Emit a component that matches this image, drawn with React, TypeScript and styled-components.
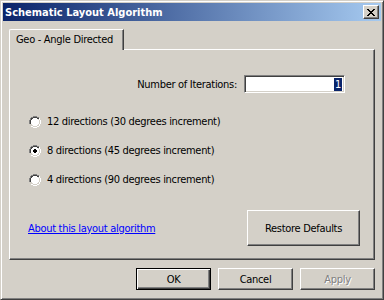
import styled, { createGlobalStyle } from "styled-components";

const GlobalStyle = createGlobalStyle`
  html, body {
    margin: 0;
    padding: 0;
    background: #d4d0c8;
  }
  body {
    font-family: "DejaVu Sans Condensed", "DejaVu Sans", sans-serif;
    font-size: 11px;
    letter-spacing: -0.3px;
    color: #000;
  }
`;

const Window = styled.div`
  width: 384px;
  height: 300px;
  box-sizing: border-box;
  display: flex;
  flex-direction: column;
  background: #d4d0c8;
  border: 1px solid;
  border-color: #d4d0c8 #404040 #404040 #d4d0c8;
  box-shadow: inset 1px 1px 0 #ffffff, inset -1px -1px 0 #808080;
  padding: 2px;
`;

const TitleBar = styled.div`
  height: 18px;
  display: flex;
  align-items: center;
  justify-content: space-between;
  padding: 0 2px 0 2px;
  background: linear-gradient(to right, #0a246a, #a6caf0);
`;

const Title = styled.span`
  color: #ffffff;
  font-weight: bold;
  font-size: 11px;
  letter-spacing: 0;
`;

const CloseButton = styled.div`
  width: 16px;
  height: 14px;
  box-sizing: border-box;
  display: flex;
  align-items: center;
  justify-content: center;
  background: #d4d0c8;
  border: 1px solid;
  border-color: #ffffff #404040 #404040 #ffffff;
  box-shadow: inset -1px -1px 0 #808080;
`;

const Body = styled.div`
  flex: 1;
  display: flex;
  flex-direction: column;
  padding: 8px 6px 0 6px;
`;

const TabStrip = styled.div`
  display: flex;
  height: 20px;
`;

const Tab = styled.div`
  box-sizing: border-box;
  height: 21px;
  width: 115px;
  padding: 3px 0 0 6px;
  white-space: nowrap;
  background: #d4d0c8;
  border-top: 1px solid #ffffff;
  border-left: 1px solid #ffffff;
  border-right: 1px solid #404040;
  box-shadow: inset -1px 0 0 #808080;
  border-top-left-radius: 2px;
  position: relative;
  z-index: 1;
`;

const Panel = styled.div`
  height: 211px;
  box-sizing: border-box;
  display: flex;
  flex-direction: column;
  border: 1px solid;
  border-color: #ffffff #404040 #404040 #ffffff;
  box-shadow: inset -1px -1px 0 #808080;
  padding: 25px 14px 13px 18px;
`;

const IterRow = styled.div`
  display: flex;
  align-items: center;
  justify-content: flex-end;
  gap: 7px;
  padding-right: 15px;
`;

const Label = styled.span`
  white-space: nowrap;
`;

const NumberInput = styled.div`
  width: 101px;
  height: 18px;
  box-sizing: border-box;
  display: flex;
  align-items: center;
  justify-content: flex-end;
  padding-right: 2px;
  background: #ffffff;
  border: 1px solid;
  border-color: #808080 #ffffff #ffffff #808080;
  box-shadow: inset 1px 1px 0 #404040, inset -1px -1px 0 #d4d0c8;
`;

const Selected = styled.span`
  background: #0a246a;
  color: #ffffff;
  padding: 0 1px;
  line-height: 13px;
`;

const RadioGroup = styled.div`
  display: flex;
  flex-direction: column;
  gap: 16px;
  margin-top: 22px;
  padding-left: 1px;
`;

const RadioRow = styled.div`
  display: flex;
  align-items: center;
  gap: 6px;
  height: 13px;
`;

const BottomRow = styled.div`
  margin-top: auto;
  display: flex;
  align-items: center;
  justify-content: space-between;
`;

const Link = styled.a`
  color: #0000ff;
  text-decoration: underline;
  cursor: pointer;
`;

const Button = styled.div<{ $default?: boolean; $disabled?: boolean; $w?: number; $h?: number }>`
  width: ${(p) => p.$w ?? 75}px;
  height: ${(p) => p.$h ?? 22}px;
  box-sizing: border-box;
  display: flex;
  align-items: center;
  justify-content: center;
  background: #d4d0c8;
  border: 1px solid;
  border-color: ${(p) =>
    p.$default ? "#000000" : "#ffffff #404040 #404040 #ffffff"};
  box-shadow: ${(p) =>
    p.$default
      ? "inset 1px 1px 0 #ffffff, inset -1px -1px 0 #404040, inset -2px -2px 0 #808080"
      : "inset -1px -1px 0 #808080"};
  color: ${(p) => (p.$disabled ? "#808080" : "#000000")};
  text-shadow: ${(p) => (p.$disabled ? "1px 1px 0 #ffffff" : "none")};
`;

const ButtonRow = styled.div`
  display: flex;
  justify-content: flex-end;
  gap: 7px;
  margin-top: 8px;
`;

function Radio({ checked }: { checked?: boolean }) {
  return (
    <svg width="12" height="12" viewBox="0 0 12 12" shapeRendering="crispEdges">
      <path d="M4 0h4v1H4zM2 1h2v1H2zM8 1h2v1H8zM1 2h1v2H1zM0 4h1v4H0z" fill="#808080" />
      <path d="M4 1h4v1H4zM2 2h2v1H2zM8 2h2v1H8zM2 3h1v1H2zM1 4h1v4H1z" fill="#404040" />
      <path d="M10 2h1v2h-1zM11 4h1v4h-1zM10 8h1v2h-1zM8 10h2v1H8zM4 11h4v1H4zM2 10h2v1H2z" fill="#ffffff" />
      <path d="M10 4h1v4h-1zM9 8h1v2H9zM8 9h1v1H8zM4 10h4v1H4zM2 9h2v1H2z" fill="#d4d0c8" />
      <path d="M4 2h4v1h1v1h1v4h-1v1h-1v1H4v-1H3v-1H2V4h1V3h1z" fill="#ffffff" />
      {checked && <path d="M5 4h2v1h1v2H7v1H5V7H4V5h1z" fill="#000000" />}
    </svg>
  );
}

const options = [
  { text: "12 directions (30 degrees increment)", checked: false },
  { text: "8 directions (45 degrees increment)", checked: true },
  { text: "4 directions (90 degrees increment)", checked: false },
];

export default function App() {
  return (
    <>
      <GlobalStyle />
      <Window>
        <TitleBar>
          <Title>Schematic Layout Algorithm</Title>
          <CloseButton>
            <svg width="8" height="7" viewBox="0 0 8 7" shapeRendering="crispEdges">
              <path
                d="M0 0h2v1h1v1h2V1h1V0h2v1H7v1H6v1H5v1h1v1h1v1h1v1H6V6H5V5H3v1H2v1H0V6h1V5h1V4h1V3H2V2H1V1H0z"
                fill="#000000"
              />
            </svg>
          </CloseButton>
        </TitleBar>
        <Body>
          <TabStrip>
            <Tab>Geo - Angle Directed</Tab>
          </TabStrip>
          <Panel>
            <IterRow>
              <Label>Number of Iterations:</Label>
              <NumberInput>
                <Selected>1</Selected>
              </NumberInput>
            </IterRow>
            <RadioGroup>
              {options.map((o) => (
                <RadioRow key={o.text}>
                  <Radio checked={o.checked} />
                  <span>{o.text}</span>
                </RadioRow>
              ))}
            </RadioGroup>
            <BottomRow>
              <Link>About this layout algorithm</Link>
              <Button $w={113} $h={36}>Restore Defaults</Button>
            </BottomRow>
          </Panel>
          <ButtonRow>
            <Button $default>OK</Button>
            <Button>Cancel</Button>
            <Button $disabled>Apply</Button>
          </ButtonRow>
        </Body>
      </Window>
    </>
  );
}
